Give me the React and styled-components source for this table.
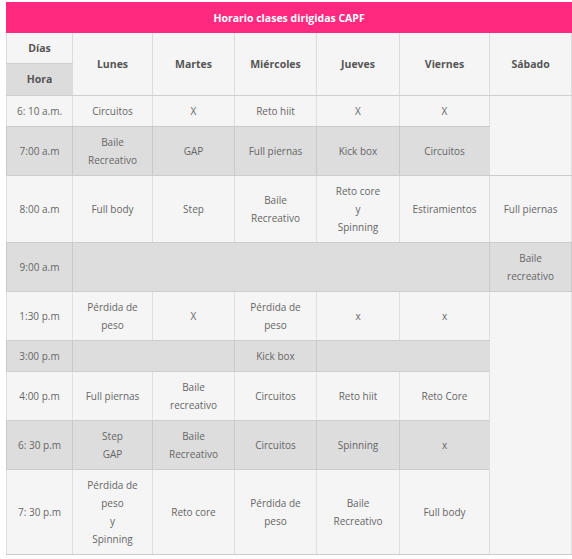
import React from 'react';
import styled, { createGlobalStyle } from 'styled-components';

const GlobalStyle = createGlobalStyle`
  body {
    margin: 0;
    background: #ffffff;
    font-family: "Open Sans", "Noto Sans", sans-serif;
  }
`;

const Wrapper = styled.div`
  padding: 2px 0 0 6px;
`;

const Table = styled.table`
  width: 565px;
  table-layout: fixed;
  border-collapse: collapse;
  font-size: 10px;
  color: #666;
  text-align: center;
`;

const TitleCell = styled.th`
  height: 29px;
  padding: 0;
  background: #ff2a7f;
  color: #fff;
  font-size: 10.5px;
  font-weight: 700;
  border: 1px solid #ff2a7f;
`;

const Th = styled.th`
  padding: 0 4px;
  height: ${p => p.$h || 'auto'};
  background: ${p => (p.$gray ? '#dcdcdc' : '#f5f5f5')};
  color: #555;
  font-size: 10.5px;
  font-weight: 700;
  line-height: 17px;
  border: 1px solid #dcdcdc;
  border-bottom-color: #cfcfcf;
`;

const Td = styled.td`
  padding: 6px 4px;
  background: ${p => (p.$gray ? '#dddddd' : '#f5f5f5')};
  line-height: 18px;
  vertical-align: middle;
  border-left: 1px solid ${p => (p.$gray ? '#c9c9c9' : '#dedede')};
  border-right: 1px solid ${p => (p.$gray ? '#c9c9c9' : '#dedede')};
  border-top: 1px solid #cccccc;
  border-bottom: 1px solid #cccccc;
`;

const widths = [66, 80, 82, 82, 83, 90, 82];
const days = ['Lunes', 'Martes', 'Miércoles', 'Jueves', 'Viernes', 'Sábado'];

const Lines = ({ text }) =>
  text.split('|').map((t, i, a) => (
    <React.Fragment key={i}>
      {t}
      {i < a.length - 1 && <br />}
    </React.Fragment>
  ));

// each row: [hora, gray, cells]; cell = text or {t, span, rows}
const rows = [
  ['6: 10 a.m.', false, ['Circuitos', 'X', 'Reto hiit', 'X', 'X', { t: '', rows: 2 }]],
  ['7:00 a.m', true, ['Baile|Recreativo', 'GAP', 'Full piernas', 'Kick box', 'Circuitos']],
  ['8:00 a.m', false, ['Full body', 'Step', 'Baile|Recreativo', 'Reto core|y|Spinning', 'Estiramientos', 'Full piernas']],
  ['9:00 a.m', true, [{ t: '', span: 5 }, 'Baile|recreativo']],
  ['1:30 p.m', false, ['Pérdida de|peso', 'X', 'Pérdida de|peso', 'x', 'x', { t: '', rows: 5 }]],
  ['3:00 p.m', true, [{ t: '', span: 2 }, 'Kick box', { t: '', span: 2 }]],
  ['4:00 p.m', false, ['Full piernas', 'Baile|recreativo', 'Circuitos', 'Reto hiit', 'Reto Core']],
  ['6: 30 p.m', true, ['Step|GAP', 'Baile|Recreativo', 'Circuitos', 'Spinning', 'x']],
  ['7: 30 p.m', false, ['Pérdida de|peso|y|Spinning', 'Reto core', 'Pérdida de|peso', 'Baile|Recreativo', 'Full body']],
];

export default function App() {
  return (
    <Wrapper>
      <GlobalStyle />
      <Table>
        <colgroup>
          {widths.map((w, i) => (
            <col key={i} style={{ width: w }} />
          ))}
        </colgroup>
        <thead>
          <tr>
            <TitleCell colSpan={7}>Horario clases dirigidas CAPF</TitleCell>
          </tr>
          <tr>
            <Th $h="30px">Días</Th>
            {days.map(d => (
              <Th key={d} rowSpan={2}>{d}</Th>
            ))}
          </tr>
          <tr>
            <Th $gray $h="31px">Hora</Th>
          </tr>
        </thead>
        <tbody>
          {rows.map(([hora, gray, cells]) => (
            <tr key={hora}>
              <Td $gray={gray}>{hora}</Td>
              {cells.map((c, i) =>
                typeof c === 'string' ? (
                  <Td key={i} $gray={gray}>
                    <Lines text={c} />
                  </Td>
                ) : (
                  <Td key={i} $gray={gray && !c.rows} colSpan={c.span || 1} rowSpan={c.rows || 1} />
                )
              )}
            </tr>
          ))}
        </tbody>
      </Table>
    </Wrapper>
  );
}
